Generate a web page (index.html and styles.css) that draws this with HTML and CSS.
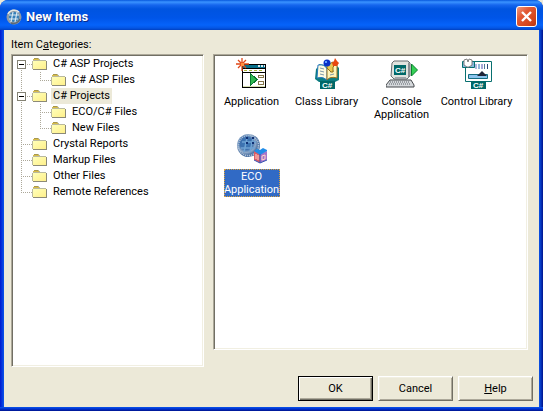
FILE: index.html
```html
<!DOCTYPE html>
<html lang="en">
<head>
<meta charset="utf-8">
<title>New Items</title>
<link rel="stylesheet" href="styles.css">
</head>
<body>
<svg class="defs" aria-hidden="true">
  <defs>
    <linearGradient id="paper" x2="1" y2="1"><stop offset="0" stop-color="#ffffb8"/><stop offset="1" stop-color="#fff08c"/></linearGradient>
    <radialGradient id="globe" cx=".4" cy=".4"><stop offset="0" stop-color="#3b78b8"/><stop offset=".55" stop-color="#3e70ad"/><stop offset=".8" stop-color="#8fa9c8"/><stop offset="1" stop-color="#5478a8"/></radialGradient>
    <symbol id="folder" viewBox="0 0 16 16">
      <path d="M0 5h1V3h1V2h5v1h1v1h6v1h1v9H1v-1H0z" fill="#b9b9a0"/>
      <path d="M1 3h6v1H1z" fill="#d8bc48"/>
      <path d="M2 2h4v1H2z" fill="#a8984c"/>
      <path d="M1 5h13v8H1z" fill="url(#paper)"/>
      <path d="M14 5h1v9H1v-1h13z" fill="#8c8a78"/>
    </symbol>
  </defs>
</svg>
<main class="window">
  <header class="titlebar">
    <svg class="app-icon" viewBox="0 0 16 16" aria-hidden="true">
      <circle cx="8" cy="8" r="7.5" fill="#8e9ba8"/>
      <path d="M2 5A7 7 0 0 1 13 3" fill="none" stroke="#e4e6e2" stroke-width="1.5"/>
      <path d="M14 10A7 7 0 0 1 5 14" fill="none" stroke="#5c6874" stroke-width="1.5"/>
      <circle cx="8" cy="8" r="5" fill="#357fb8"/>
      <path d="M7 3L5 13M11 3L9 13M3 6h10M3 10h9" stroke="#dcebf5" stroke-width="1.2"/>
    </svg>
    <h1>New Items</h1>
    <button class="close" aria-label="Close">
      <svg viewBox="0 0 19 19" aria-hidden="true"><path d="M5 5l9 9M14 5l-9 9" stroke="#fff" stroke-width="2.4"/></svg>
    </button>
  </header>
  <div class="client">
    <p class="caption" id="categories">Item C<u>a</u>tegories:</p>
    <div class="panes">
      <nav class="pane tree" aria-labelledby="categories">
        <ul>
          <li>
            <button class="toggle" aria-label="Collapse"></button>
            <div class="row"><svg><use href="#folder"/></svg><span>C# ASP Projects</span></div>
            <ul>
              <li><div class="row"><svg><use href="#folder"/></svg><span>C# ASP Files</span></div></li>
            </ul>
          </li>
          <li>
            <button class="toggle" aria-label="Collapse"></button>
            <div class="row current"><svg><use href="#folder"/></svg><span>C# Projects</span></div>
            <ul>
              <li><div class="row"><svg><use href="#folder"/></svg><span>ECO/C# Files</span></div></li>
              <li><div class="row"><svg><use href="#folder"/></svg><span>New Files</span></div></li>
            </ul>
          </li>
          <li><div class="row"><svg><use href="#folder"/></svg><span>Crystal Reports</span></div></li>
          <li><div class="row"><svg><use href="#folder"/></svg><span>Markup Files</span></div></li>
          <li><div class="row"><svg><use href="#folder"/></svg><span>Other Files</span></div></li>
          <li><div class="row"><svg><use href="#folder"/></svg><span>Remote References</span></div></li>
        </ul>
      </nav>
      <section class="pane items" aria-label="Items">
        <button class="item">
          <svg viewBox="0 0 32 32" aria-hidden="true" shape-rendering="crispEdges">
            <path d="M6 7h24v24H6z" fill="#000"/>
            <path d="M7 8h22v3H7z" fill="#08708c"/>
            <path d="M22 8h2v2h-2zM25 8h2v2h-2zM28 8h1v2h-1z" fill="#d8e8f0"/>
            <path d="M7 12h22v3H7z" fill="#fff"/>
            <path d="M8 13h3v1H8zM13 13h3v1h-3zM18 13h3v1h-3zM23 13h3v1h-3z" fill="#a8b840"/>
            <path d="M7 16h22v13H7z" fill="#fff"/>
            <path d="M7 29h22v1H7z" fill="#d9dfb0"/>
            <path d="M14 16v13l7-6.5z" fill="#30b850" stroke="#087830"/>
            <path d="M22.500 18.500h5v2h-5zM22.500 24.500h5v3h-5z" fill="#fff" stroke="#85764a"/>
            <path d="M6 1v13M0 7h13M2 3l8 8M10 3l-8 8" stroke="#e04818" stroke-width="1.3" shape-rendering="auto"/>
            <path d="M5 6h3v3H5z" fill="#ff9040"/>
          </svg>
          <span>Application</span>
        </button>
        <button class="item">
          <svg viewBox="0 0 32 32" aria-hidden="true">
            <path d="M5 12l3-3v-2l6 1 3 3 3-3 6-1v2l2 2v12l-4 2H8l-4-3z" fill="#0b7c80"/>
            <path d="M7 8q7-1 9 4v11q-4-4-10-2z" fill="#fffbe0" stroke="#2878c0"/>
            <path d="M16 12q4-5 10-4v13q-7-2-10 2z" fill="#fff4b8" stroke="#987020"/>
            <path d="M9 11l4 1M9 14l4 1M9 17l4 1M19 15l4-1M19 18l4-1" stroke="#8098a8"/>
            <path d="M16 8l6-3 2 3-2 2v5h-2l-4-4z" fill="#e8c850" stroke="#907018"/>
            <circle cx="16" cy="6" r="3.5" fill="#0830c8"/><path d="M14 4h2v2h-2z" fill="#609cff"/>
            <path d="M24 1l2 3 2 2-2 3h-4l-1-3 2-2z" fill="#e84810"/>
            <path d="M9 24h15v8H9z" fill="#006868"/>
            <text x="11" y="31">C#</text>
          </svg>
          <span>Class Library</span>
        </button>
        <button class="item">
          <svg viewBox="0 0 32 32" aria-hidden="true">
            <path d="M6 6l2-2h14l2 2v13l-3 3H8l-3-3z" fill="#e1e3df" stroke="#686c70"/>
            <path d="M22 5l2 2v12l-2 2z" fill="#8c9094"/>
            <path d="M8 8h12v10H8z" fill="#006868"/>
            <text x="9" y="16">C#</text>
            <path d="M9 20h11v2H9z" fill="#a0a4a8"/>
            <path d="M4 23h21l3 5v2H0v-2z" fill="#d5d8db" stroke="#45494c"/>
            <path d="M4 25h20M3 27h22" stroke="#596068" stroke-dasharray="1 1"/>
            <path d="M25.500 7v12l6-6z" fill="#35cf55" stroke="#08802c"/>
          </svg>
          <span>Console Application</span>
        </button>
        <button class="item">
          <svg viewBox="0 0 32 32" aria-hidden="true">
            <path d="M4.500 4.500h26v20h-26z" fill="#fff" stroke="#087070"/>
            <path d="M14 7h2v5h-2z" fill="#b0b8e0"/><path d="M17 7h2v5h-2z" fill="#90b8d8"/><path d="M20 7h2v5h-2z" fill="#a8a8d8"/><path d="M23 7h1v5h-1z" fill="#507898"/><path d="M26 7h1v5h-1z" fill="#304878"/>
            <path d="M7.500 17.500h19v4h-19z" fill="#8bc4ed" stroke="#146c80"/>
            <path d="M16 19l5-5 5 5z" fill="#202438"/>
            <path d="M1.500 4.500h12v6h-12z" fill="#87b7de" stroke="#087070"/>
            <path d="M3 3l3-1 1 3 1-3 3 1v5l-3 2H6L3 8z" fill="#fff" stroke="#808080"/>
            <path d="M10 24h15v8H10z" fill="#006868"/>
            <text x="12" y="31">C#</text>
          </svg>
          <span>Control Library</span>
        </button>
        <button class="item selected">
          <svg viewBox="0 0 32 32" aria-hidden="true">
            <circle cx="12.500" cy="13.500" r="11.500" fill="url(#globe)"/>
            <circle cx="12.500" cy="13.500" r="10" fill="none" stroke="#b6c8db" stroke-width="1.5" stroke-dasharray="1 1"/>
            <path d="M11 6L8 20M17 6l-3 14M6 10h14M5 16h14" stroke="#6fa3d3" stroke-width="1.5"/>
            <path d="M10 6h2M16 6h2M10 11h2M16 11h2" stroke="#102f72" stroke-width="2"/>
            <path d="M18 19l6 3v9l-6-3z" fill="#dc5c65"/><path d="M24 22l7-3v9l-7 3z" fill="#a675c9"/>
            <path d="M18 19l3-2 3 1 3-2 4 2v1l-7 4z" fill="#208ce8"/>
            <path d="M18 28l6 3 7-3M24 22v9" fill="none" stroke="#3856b4"/>
            <path d="M20 22v5M22 23v5M26 24l3-1v4l-3 1z" fill="none" stroke="#ffd3c8"/>
          </svg>
          <span>ECO Application</span>
        </button>
      </section>
    </div>
    <footer class="actions">
      <button class="push default">OK</button>
      <button class="push">Cancel</button>
      <button class="push"><u>H</u>elp</button>
    </footer>
  </div>
</main>
</body>
</html>
```
FILE: styles.css
```css
* {
  box-sizing: border-box;
}

body {
  margin: 0;
  background: #ece9d8;
  color: #000;
  font: 11px/13px Roboto, "Noto Sans", sans-serif;
}

button {
  margin: 0;
  padding: 0;
  border: 0;
  background: none;
  color: inherit;
  font: inherit;
}

ul {
  margin: 0;
  padding: 0;
  list-style: none;
}

.defs {
  position: absolute;
  width: 0;
  height: 0;
}

.window {
  display: flex;
  flex-direction: column;
  min-height: 100vh;
  border-radius: 8px 8px 0 0;
  background: linear-gradient(90deg, #0019cf, #0b55ea 4px, #0b55ea calc(100% - 4px), #00138c);
  overflow: hidden;
}

.titlebar {
  display: flex;
  align-items: center;
  gap: 4px;
  height: 30px;
  padding: 3px 6px 0;
  background: linear-gradient(#0758dd, #3a93ff 2px, #1666ee 5px, #0054e0 9px, #0055e8 18px, #0563fa 25px, #0456e4 28px, #0040c0);
}

.titlebar h1 {
  flex: 1;
  margin: 0;
  color: #fff;
  font-size: 13px;
  line-height: 18px;
  text-shadow: 1px 1px #0a2a88;
}

.app-icon {
  width: 16px;
  height: 16px;
}

.close {
  width: 21px;
  height: 21px;
  border: 1px solid #fff;
  border-radius: 3px;
  background: linear-gradient(135deg, #f09a80, #e25a35 35%, #d4451b 75%, #b83510);
}

.close svg {
  display: block;
}

.client {
  flex: 1;
  display: flex;
  flex-direction: column;
  margin: 0 4px;
  padding: 8px 6px 6px 7px;
  background: #ece9d8;
}

.window::after {
  content: "";
  height: 4px;
  background: linear-gradient(#0b55ea, #0030d0 50%, #00138c);
}

.caption {
  margin: 0 0 2px;
  line-height: 14px;
}

.panes {
  flex: 1;
  display: grid;
  grid-template-columns: 193px 1fr;
  gap: 9px;
  padding-right: 5px;
}

.pane {
  border: 1px solid;
  border-color: #aca899 #fff #fff #aca899;
  background: #fff;
  box-shadow: inset 1px 1px #716f64, inset -1px -1px #f1efe2;
}

.tree {
  padding: 1px;
}

.tree li {
  position: relative;
  padding-left: 19px;
}

.tree li::before {
  content: "";
  position: absolute;
  left: 8px;
  top: 0;
  bottom: 0;
  width: 1px;
  background: repeating-linear-gradient(#aca899 0 1px, transparent 1px 2px);
}

.tree li::after {
  content: "";
  position: absolute;
  left: 8px;
  top: 8px;
  width: 11px;
  height: 1px;
  background: repeating-linear-gradient(90deg, #aca899 0 1px, transparent 1px 2px);
}

.tree > ul > li:first-child::before {
  top: 8px;
}

.tree li:last-child::before {
  bottom: auto;
  height: 8px;
}

.toggle {
  position: absolute;
  z-index: 1;
  left: 4px;
  top: 4px;
  width: 9px;
  height: 9px;
  border: 1px solid #848274;
  background: linear-gradient(#000, #000) center / 5px 1px no-repeat #fff;
}

.row {
  display: flex;
  height: 16px;
}

.row svg {
  width: 16px;
  height: 16px;
}

.row span {
  margin-left: 3px;
  padding: 0 2px;
  line-height: 16px;
  white-space: nowrap;
}

.current span {
  background: #ece9d8;
}

.items {
  display: grid;
  grid-template-columns: repeat(auto-fill, 75px);
  grid-auto-rows: 75px;
  align-content: start;
  margin-bottom: 17px;
  padding-top: 2px;
}

.item {
  display: flex;
  flex-direction: column;
  align-items: center;
  gap: 5px;
}

.item svg {
  width: 32px;
  height: 32px;
}

.item span {
  max-width: 75px;
  padding: 1px;
  white-space: nowrap;
}

.item:nth-child(3) span,
.item.selected span {
  width: 56px;
  padding: 1px 0;
  white-space: normal;
}

.item.selected span {
  outline: 1px dotted #d8a03c;
  outline-offset: -1px;
  background: #316ac5;
  color: #fff;
}

.item text {
  fill: #fff;
  font: bold 8px "Liberation Sans", sans-serif;
}

.actions {
  display: flex;
  justify-content: flex-end;
  gap: 5px;
  margin-top: 9px;
}

.push {
  width: 75px;
  height: 25px;
  border: 1px solid;
  border-color: #fff #716f64 #716f64 #fff;
  background: #ece9d8;
  box-shadow: inset 1px 1px #f1efe2, inset -1px -1px #aca899;
}

.push.default {
  border-color: #000;
  box-shadow: inset 1px 1px #fff, inset -1px -1px #716f64, inset -2px -2px #aca899;
}
```
